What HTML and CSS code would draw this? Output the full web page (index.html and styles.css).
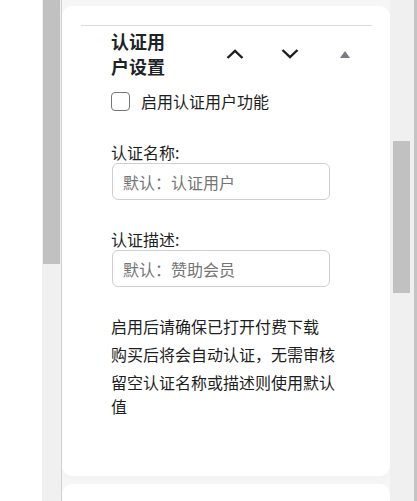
FILE: index.html
```html
<!DOCTYPE html>
<html lang="zh-CN">
<head>
  <meta charset="UTF-8" />
  <title>认证用户设置</title>
  <link rel="stylesheet" href="styles.css">
</head>
<body>

  <div class="layout">
    <div class="left-pane"></div>

    <div class="left-scroll">
      <div class="thumb left-thumb"></div>
    </div>

    <div class="editor">
      <div class="card">
        <div class="panel">
          <div class="panel-header">
            <h2 class="panel-title">认证用户设置</h2>
            <div class="actions">
              <button class="action" aria-label="上移">
                <svg width="18" height="10" viewBox="0 0 18 10"><path d="M1.5 9L9 1.8L16.5 9" fill="none" stroke="#1e1e1e" stroke-width="2.4"/></svg>
              </button>
              <button class="action" aria-label="下移">
                <svg width="18" height="10" viewBox="0 0 18 10"><path d="M1.5 1L9 8.2L16.5 1" fill="none" stroke="#1e1e1e" stroke-width="2.4"/></svg>
              </button>
              <button class="action" aria-label="折叠">
                <svg width="10" height="7" viewBox="0 0 10 7"><path d="M0 7L5 0L10 7Z" fill="#787c82"/></svg>
              </button>
            </div>
          </div>

          <div class="panel-body">
            <label class="check-row">
              <input type="checkbox" class="check">
              <span>启用认证用户功能</span>
            </label>

            <div class="field">
              <label for="certName">认证名称:</label>
              <input type="text" id="certName" placeholder="默认：认证用户">
            </div>

            <div class="field">
              <label for="certDesc">认证描述:</label>
              <input type="text" id="certDesc" placeholder="默认：赞助会员">
            </div>

            <div class="notes">
              <p>启用后请确保已打开付费下载</p>
              <p>购买后将会自动认证，无需审核</p>
              <p>留空认证名称或描述则使用默认值</p>
            </div>
          </div>
        </div>
      </div>

      <div class="card next-card"></div>
    </div>

    <div class="right-scroll">
      <div class="thumb right-thumb"></div>
    </div>

    <div class="edge"></div>
  </div>

</body>
</html>
```

FILE: styles.css
```css
body {
  font-family: "Noto Sans CJK SC", "Noto Sans", sans-serif;
  margin: 0;
  padding: 0;
  background: #fff;
  color: #1e1e1e;
  overflow: hidden;
}

.layout {
  display: flex;
  height: 501px;
}

.left-pane {
  width: 42px;
  background: #fff;
}

.left-scroll {
  width: 19px;
  background: #f0f0f0;
  border-right: 1px solid #d0d0d0;
}

.thumb {
  background: #c1c1c1;
  width: 17px;
}

.left-thumb {
  margin-left: 1px;
  height: 264px;
}

.editor {
  width: 328px;
  background: #f6f6f6;
  padding-top: 6px;
  overflow: hidden;
}

.card {
  background: #fff;
  border-radius: 10px;
}

.card:first-child {
  height: 470px;
  box-shadow: 0 3px 6px rgba(0, 0, 0, 0.02);
}

.next-card {
  margin-top: 8px;
  height: 40px;
}

.panel {
  margin: 0 18px 0 19px;
  padding-top: 19px;
}

.panel-header {
  display: flex;
  align-items: center;
  border-top: 1px solid #dcdcde;
  padding: 3px 0 0 30px;
}

.panel-title {
  width: 58px;
  margin: 0;
  font-size: 18px;
  font-weight: bold;
  line-height: 25px;
  color: #1d2327;
}

.actions {
  display: flex;
  margin-left: auto;
}

.action {
  width: 55px;
  height: 50px;
  padding: 0;
  border: none;
  background: none;
  display: flex;
  align-items: center;
  justify-content: center;
  cursor: pointer;
}

.panel-body {
  padding: 10px 30px 0 30px;
  font-size: 16px;
}

.check-row {
  display: flex;
  align-items: center;
  gap: 11px;
  line-height: 24px;
}

.check {
  appearance: none;
  width: 19px;
  height: 19px;
  margin: 0;
  border: 1px solid #757575;
  border-radius: 4px;
  background: #fff;
}

.field {
  margin-top: 28px;
}

.field label {
  display: block;
  line-height: 22px;
}

.field input {
  width: 218px;
  height: 37px;
  box-sizing: border-box;
  margin-left: 1px;
  padding: 0 10px;
  border: 1px solid #cfcfcf;
  border-radius: 6px;
  font-family: inherit;
  font-size: 16px;
  color: #1e1e1e;
}

.field input::placeholder {
  color: #757575;
}

.notes {
  margin-top: 27px;
}

.notes p {
  margin: 0 0 4px;
  line-height: 24px;
}

.right-scroll {
  width: 24px;
  background: #f0f0f0;
  padding-top: 141px;
}

.right-thumb {
  margin-left: 3px;
  height: 152px;
}

.edge {
  width: 3px;
  background: #c4c4c4;
}
```
